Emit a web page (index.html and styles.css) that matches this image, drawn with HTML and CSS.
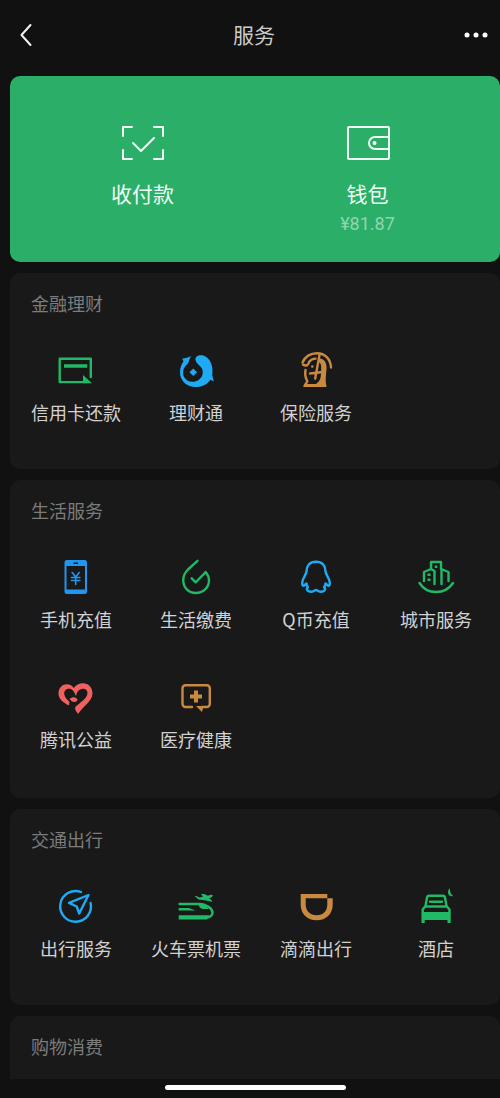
FILE: index.html
```html
<!DOCTYPE html>
<html lang="zh-CN">
<head>
<meta charset="utf-8">
<meta name="viewport" content="width=device-width, initial-scale=1">
<title>服务</title>
<link rel="stylesheet" href="styles.css">
</head>
<body>
<div class="app">
  <header class="topbar">
    <button class="topbar-btn" type="button" aria-label="返回">
      <svg class="back-icon" viewBox="0 0 12 24"><path d="M10.500 2 1.500 12l9 10"/></svg>
    </button>
    <h1 class="topbar-title">服务</h1>
    <button class="topbar-btn topbar-btn-end" type="button" aria-label="更多">
      <svg class="more-icon" viewBox="0 0 24 6"><circle cx="3" cy="3" r="2.500"/><circle cx="12" cy="3" r="2.500"/><circle cx="21" cy="3" r="2.500"/></svg>
    </button>
  </header>

  <main class="content">
    <section class="pay">
      <button class="pay-item" type="button">
        <svg class="pay-icon" viewBox="0 0 44 36"><path d="M2 11V2h9M33 2h9v9M42 25v9h-9M11 34H2v-9M12 18l8 8 13-13"/></svg>
        <span class="pay-label">收付款</span>
      </button>
      <button class="pay-item" type="button">
        <svg class="pay-icon" viewBox="0 0 44 36"><rect x="2" y="2" width="41" height="32" rx="1"/><path d="M42 12H29a6 6 0 0 0 0 12h13"/><circle class="dot" cx="28.500" cy="18" r="2"/></svg>
        <span class="pay-label">钱包</span>
        <span class="pay-amount">¥81.87</span>
      </button>
    </section>

    <section class="panel">
      <h2 class="panel-title">金融理财</h2>
      <div class="grid">
        <button class="item" type="button">
          <svg class="icon green" viewBox="0 0 40 40"><path class="line" d="M34.800 27V8.800H3.700v23.300H29"/><path d="M8 14.300h23.300v3.400H8zM27 25l9 8.200h-9z"/></svg>
          <span class="label">信用卡还款</span>
        </button>
        <button class="item" type="button">
          <svg class="icon cyan" viewBox="0 0 40 40"><path d="M15 6C13 9 13.500 12 11 14.500C7 18 6 22.500 8 27C10.500 31.500 16 33 20.500 31C25.500 29 27.500 24.500 26.500 20C25.500 16 20.500 14.500 19.500 10C19 6 23 4.200 27.500 5.600C34 8 37.700 16 36.200 25L37.800 31.500L34.300 29.700C31 34.700 26 37 20 37C11 37 4 31 4 22C4 17.500 5.500 14 7.500 11.500L6.300 8.500C10 8.500 12 7.500 15 6Z"/><path d="M17.300 18.500 21 22.300 17.300 26 13.500 22.300Z"/></svg>
          <span class="label">理财通</span>
        </button>
        <button class="item" type="button">
          <svg class="icon amber" viewBox="0 0 40 40"><path class="line" d="M6.500 12.500C9.500 5.500 15 3.200 21 3.200C29 3.200 34.500 9 35 17.500"/><path class="line" d="M7 14.500C10 17 13 14.500 13 12C14.500 10 17 8.700 19.500 8.600M23.500 5 19.200 28.500M14 23.500 27 22M9.500 20C8 27 11 29.500 11.300 31.500L8.500 35.800H29"/><path d="M23.500 8.500C29 9 31 13.500 30.500 19C30 25 29 31 30.500 37H7.500L9 34H20C24.500 31 25 27 25 22C25.500 17 25.500 13 22.500 12Z"/><circle cx="16.300" cy="16.500" r="1.300"/></svg>
          <span class="label">保险服务</span>
        </button>
      </div>
    </section>

    <section class="panel panel-long">
      <h2 class="panel-title">生活服务</h2>
      <div class="grid">
        <button class="item" type="button">
          <svg class="icon blue" viewBox="0 0 40 40"><path fill-rule="evenodd" d="M11 3h17.500a2.500 2.500 0 0 1 2.500 2.500v29a2.500 2.500 0 0 1-2.500 2.500H11a2.500 2.500 0 0 1-2.500-2.500v-29A2.500 2.500 0 0 1 11 3ZM10.500 9v23.500H29V9ZM17.500 5.500v1.500h4.500V5.500Z"/><path class="line thin" d="M16.200 15.500l3.500 4.500 3.500-4.500M19.700 20v7.500M15.500 20.500h8.400M15.500 23.500h8.400"/></svg>
          <span class="label">手机充值</span>
        </button>
        <button class="item" type="button">
          <svg class="icon green" viewBox="0 0 40 40"><path class="line" d="M21.500 3.800 12 12.500C8.500 16 7.200 19 7.200 23C7.200 30.500 12.700 36 19.800 36C27 36 33 30.500 33 23.500C33 20.500 32 17.800 29.700 15L19.700 25.300 15.700 21.300"/></svg>
          <span class="label">生活缴费</span>
        </button>
        <button class="item" type="button">
          <svg class="icon cyan" viewBox="0 0 40 40"><path class="line" d="M20 4.700C13.500 4.700 10.500 9 10.500 14.500C10 18.500 6.200 21 6.200 26C6.200 28.500 7 29 8 28.700L10.500 26.500C10.500 28 11 29 12 30.200C10 31.500 10.500 34.700 15.500 34.700C18 34.700 19 33 20 33C21 33 22 34.700 24.500 34.700C29.500 34.700 30 31.500 28 30.200C29 29 29.500 28 29.500 26.500L32 28.700C33 29 33.800 28.500 33.800 26C33.800 21 30 18.500 29.500 14.500C29.500 9 26.500 4.700 20 4.700Z"/></svg>
          <span class="label">Q币充值</span>
        </button>
        <button class="item" type="button">
          <svg class="icon green" viewBox="0 0 40 40"><path class="line" d="M8 24V15l7-3V5h10v7l7.500 3v9M15 12l3.500 2v13M25.500 12v15M3.500 26C11 38 29 38 37 26"/><path d="M11.500 16.500h3v2.500h-3zM11.500 21.500h3V24h-3zM18.800 8.500h2.500V11h-2.500z"/></svg>
          <span class="label">城市服务</span>
        </button>
        <button class="item" type="button">
          <svg class="icon red" viewBox="0 0 40 40"><path d="M13 28.500C6 25 2.500 21.500 2.500 16.500C2.500 10.500 6.500 7.200 11 7.200C14 7.200 16.500 8.500 17.700 11C20 7.500 24 6 28 6.300C33 7 36.500 11 36.500 16.500C36 25 28 28 22 37C20.500 34.500 19 33.500 19 30.500C22 26.500 31.500 22 31.500 16C31.500 10.500 24.500 10.500 21.700 14.500C20.500 16 20.300 18 20 19.500C19.300 17 18 13.500 15 12C11.500 10.700 8 13 8.200 16.500C8.400 20 11 22.500 13.500 25Z"/><path d="M13.500 22C16.500 19.500 19.800 20 21.500 22.500C21.500 25 18 25.500 16 24.500Z"/></svg>
          <span class="label">腾讯公益</span>
        </button>
        <button class="item" type="button">
          <svg class="icon amber" viewBox="0 0 40 40"><path class="line" d="M16 30H9.500a3 3 0 0 1-3-3V11.300a3 3 0 0 1 3-3h21.300a3 3 0 0 1 3 3V27a3 3 0 0 1-3 3H26"/><path d="M20 29h7.500l-1.500 6zM18 13.500h4v4h4v4h-4v4h-4v-4h-4v-4h4z"/></svg>
          <span class="label">医疗健康</span>
        </button>
      </div>
    </section>

    <section class="panel">
      <h2 class="panel-title">交通出行</h2>
      <div class="grid">
        <button class="item" type="button">
          <svg class="icon cyan" viewBox="0 0 40 40"><path class="line" d="M25 6A15.400 15.400 0 1 0 34.600 17"/><path class="line" d="M32.500 9 13 16.800 20.700 20.500 23.200 27.500Z"/></svg>
          <span class="label">出行服务</span>
        </button>
        <button class="item" type="button">
          <svg class="icon green" viewBox="0 0 40 40"><path class="line" d="M3.500 18H24C31 18.500 36.500 22.500 36.500 26.500C36.500 29.500 34 31 31 31.500"/><path d="M2.700 29.300H33L31 33.500H2.700zM2.700 22H13L19.500 24.500H2.700zM22.500 17H26.500L33 23H26.500C24 22.500 22.500 20 22.500 17ZM18.500 10 21 10.300 23.500 11.500 27 10.800 25 8H28L32 9.700C34 8.700 36.500 8.500 37 9.500C36.500 11 34.500 12 33 12.300L36 14.500V15.700L28.500 14.300L22.500 13.600Z"/></svg>
          <span class="label">火车票机票</span>
        </button>
        <button class="item" type="button">
          <svg class="icon amber" viewBox="0 0 40 40"><path fill-rule="evenodd" d="M4.700 8H31.300V12.300H36.700V18.500C36.700 28 30 34.300 20.700 34.300S4.700 28 4.700 18.500ZM9.700 12.300V18.500C9.700 25 14 29.300 20.700 29.300S31.300 25 31.300 18.500V12.300Z"/></svg>
          <span class="label">滴滴出行</span>
        </button>
        <button class="item" type="button">
          <svg class="icon green" viewBox="0 0 40 40"><path class="line" d="M6.700 26V23.500L9.500 20L11 11.500Q11.300 9.700 13 9.700H27Q28.700 9.700 29 11.500L30.500 20L33.500 23.500V26M14 15.800H26M9.500 20.500H30.500"/><path d="M5.500 26H34.700V37H31.500V34H8.700V37H5.500ZM34 2.300C30.500 5 31.500 11 37.500 10.300C35 8.500 33.700 6 34 2.300Z"/></svg>
          <span class="label">酒店</span>
        </button>
      </div>
    </section>

    <section class="panel">
      <h2 class="panel-title">购物消费</h2>
    </section>
  </main>

  <footer class="home"><div class="home-bar"></div></footer>
</div>
</body>
</html>
```
FILE: styles.css
```css
* {
  box-sizing: border-box;
}

body {
  margin: 0;
  background: #111111;
  color: #d2d2d2;
  font-family: "Noto Sans CJK SC", sans-serif;
}

button {
  margin: 0;
  padding: 0;
  border: 0;
  background: none;
  color: inherit;
  font: inherit;
  cursor: pointer;
}

.app {
  display: flex;
  flex-direction: column;
  height: 100vh;
}

.topbar {
  display: grid;
  grid-template-columns: 1fr auto 1fr;
  align-items: center;
  flex: none;
  height: 72px;
  padding: 0 12px 2px 20px;
}

.topbar-title {
  margin: 0;
  padding-bottom: 2px;
  color: #cccccc;
  font-size: 21px;
  font-weight: 400;
  line-height: 30px;
}

.topbar-btn {
  display: flex;
  justify-self: start;
}

.topbar-btn-end {
  justify-self: end;
}

.back-icon {
  width: 12px;
  height: 24px;
  fill: none;
  stroke: #f2f2f2;
  stroke-width: 2;
  stroke-linecap: round;
  stroke-linejoin: round;
}

.more-icon {
  width: 24px;
  height: 6px;
  fill: #ffffff;
}

.content {
  display: flex;
  flex-direction: column;
  flex: 1;
  gap: 11px;
  min-height: 0;
  padding: 4px 0 0 10px;
  overflow-y: auto;
  scrollbar-width: none;
}

.pay {
  display: grid;
  grid-template-columns: 1fr 1fr;
  flex: none;
  padding: 49px 20px 26px;
  border-radius: 10px;
  background: #2bae68;
}

.pay-item {
  display: flex;
  flex-direction: column;
  align-items: center;
}

.pay-icon {
  width: 44px;
  height: 36px;
  margin-bottom: 17px;
  fill: none;
  stroke: #effff5;
  stroke-width: 2;
  stroke-linecap: round;
  stroke-linejoin: round;
}

.pay-icon .dot {
  fill: #effff5;
  stroke: none;
}

.pay-label {
  color: #effff5;
  font-size: 21px;
  line-height: 30px;
}

.pay-amount {
  margin-top: 4px;
  color: #8fd6ae;
  font-family: Roboto, sans-serif;
  font-size: 18px;
  line-height: 24px;
}

.panel {
  flex: none;
  padding: 20px 4px 45px 6px;
  border-radius: 10px;
  background: #191919;
}

.panel-long {
  padding-bottom: 47px;
}

.panel-title {
  margin: 0;
  padding-left: 15px;
  color: #7c7c7c;
  font-size: 18px;
  font-weight: 400;
  line-height: 20px;
}

.grid {
  display: grid;
  grid-template-columns: repeat(4, 1fr);
  row-gap: 46px;
  margin-top: 37px;
}

.item {
  display: flex;
  flex-direction: column;
  align-items: center;
  gap: 10px;
}

.icon {
  width: 40px;
  height: 40px;
  fill: currentColor;
}

.icon .line {
  fill: none;
  stroke: currentColor;
  stroke-width: 2.4;
  stroke-linecap: round;
  stroke-linejoin: round;
}

.icon .thin {
  stroke-width: 1.6;
}

.label {
  font-size: 18px;
  line-height: 24px;
  white-space: nowrap;
}

.green {
  color: #20b965;
}

.cyan {
  color: #1eaaf5;
}

.blue {
  color: #2196f0;
}

.amber {
  color: #c98a40;
}

.red {
  color: #f0605f;
}

.home {
  display: flex;
  justify-content: center;
  flex: none;
  height: 19px;
  padding: 6px 0 0 11px;
}

.home-bar {
  width: 37%;
  height: 5px;
  border-radius: 3px;
  background: #ffffff;
}
```
